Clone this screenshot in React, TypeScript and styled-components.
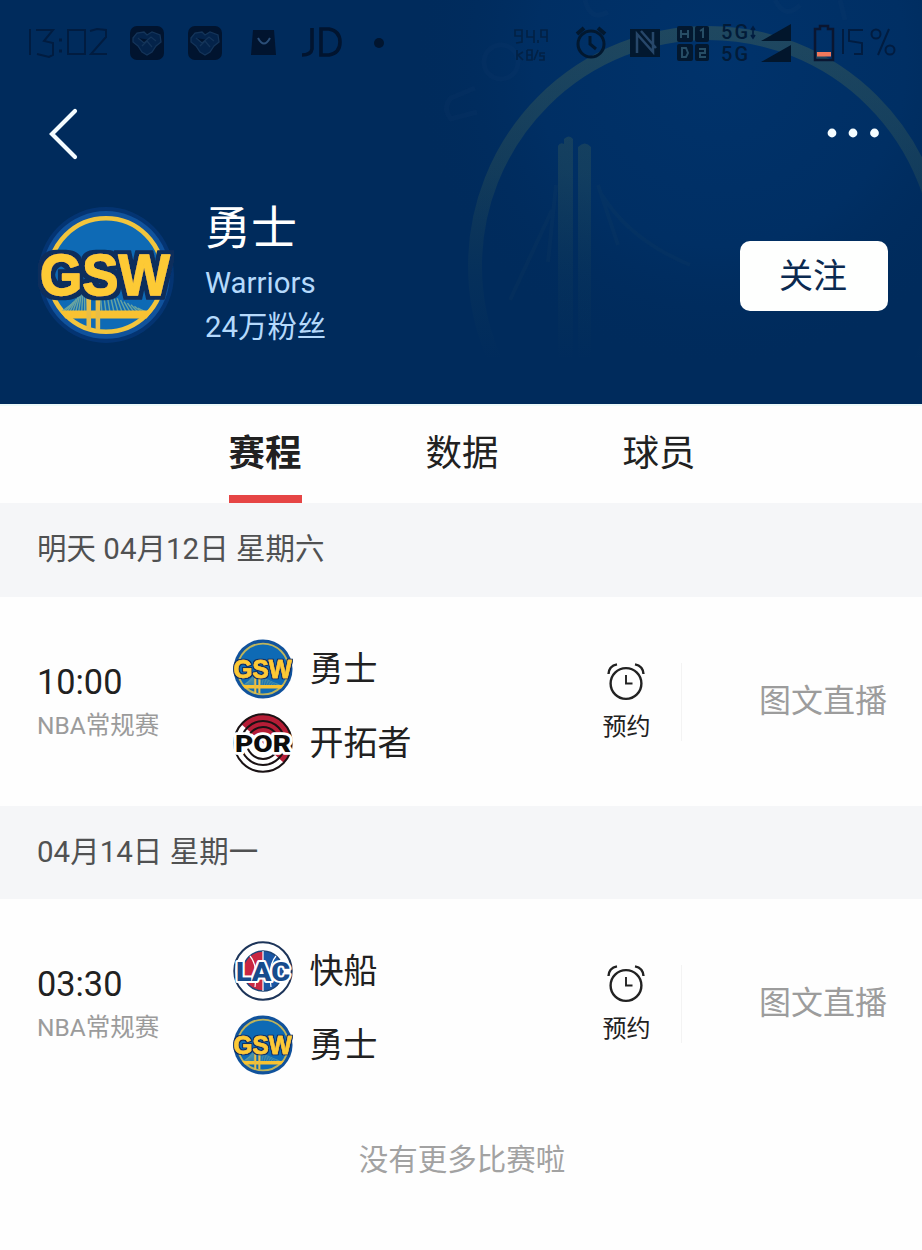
import React, { useId } from "react";
import styled, { createGlobalStyle } from "styled-components";

const GlobalStyle = createGlobalStyle`
  * { box-sizing: border-box; }
  body {
    margin: 0;
    background: #fefefe;
    font-family: Roboto, "Noto Sans CJK SC", sans-serif;
    color: #212121;
  }
`;

const Page = styled.main`
  width: 922px;
  height: 1250px;
  overflow: hidden;
  background: #fefefe;
`;

const Hero = styled.header`
  position: relative;
  height: 404px;
  background: #002b5c;
  overflow: hidden;
`;

const Watermark = styled.svg`
  position: absolute;
  inset: 0;
`;

const HeroContent = styled.div`
  position: relative;
  display: flex;
  flex-direction: column;
`;

const StatusIcons = styled.svg`
  display: block;
  width: 922px;
  height: 86px;
`;

const NavBar = styled.nav`
  display: flex;
  justify-content: space-between;
  align-items: center;
  height: 96px;
  padding: 0 42px 0 48px;
`;

const Profile = styled.section`
  display: flex;
  align-items: flex-start;
  padding: 17px 34px 0 32px;
`;

const LogoSvg = styled.svg<{ $drop?: number }>`
  flex: none;
  overflow: visible;
  margin-top: ${(p) => p.$drop ?? 0}px;
`;

const LogoText = styled.text<{ $face?: string }>`
  font-family: ${(p) => p.$face ?? '"Liberation Sans"'}, Arial, sans-serif;
  font-weight: 900;
  paint-order: stroke;
  stroke-linejoin: round;
`;

const ProfileText = styled.div`
  display: flex;
  flex-direction: column;
  margin-left: 25px;
  flex: 1;
`;

const TeamTitle = styled.h1`
  margin: 0 0 4px;
  font-size: 46px;
  font-weight: 400;
  line-height: 58px;
  color: #fff;
`;

const ProfileLine = styled.p`
  margin: 0;
  font-size: 29.4px;
  line-height: 44px;
  color: #b5d9fb;
`;

const FollowButton = styled.button`
  width: 148px;
  height: 70px;
  margin-top: 42px;
  padding: 0 2px 0 0;
  border: 0;
  border-radius: 10px;
  background: #fefffe;
  color: #0b2a50;
  font: 34px/70px Roboto, "Noto Sans CJK SC", sans-serif;
`;

const Tabs = styled.nav`
  display: flex;
  justify-content: center;
  gap: 124px;
  height: 99px;
  padding-left: 2px;
  border-top: 2px solid #edfafa;
`;

const Tab = styled.a<{ $active?: boolean }>`
  display: flex;
  justify-content: center;
  width: 73px;
  padding-top: 20px;
  font-size: 36.5px;
  line-height: 55px;
  white-space: nowrap;
  font-weight: ${(p) => (p.$active ? 700 : 400)};
  border-bottom: 8px solid ${(p) => (p.$active ? "#e64545" : "transparent")};
`;

const DateBar = styled.h2<{ $height: number }>`
  margin: 0;
  height: ${(p) => p.$height}px;
  padding-left: 37px;
  background: #f5f6f8;
  color: #505152;
  font-size: 29.5px;
  font-weight: 400;
  line-height: ${(p) => p.$height - 1}px;
`;

const MatchRow = styled.article`
  display: grid;
  grid-template-columns: 196.4px 338.6px 110px 1fr;
  height: 209px;
  padding-left: 37px;
`;

const Kickoff = styled.div`
  padding-top: 64px;
`;

const Time = styled.div`
  font-size: 34.3px;
  line-height: 42px;
`;

const League = styled.div`
  font-size: 24.5px;
  line-height: 45px;
  color: #9b9b9b;
`;

const Teams = styled.div`
  display: flex;
  flex-direction: column;
  gap: 14px;
  padding-top: 42px;
`;

const Team = styled.div`
  display: flex;
  align-items: center;
  gap: 16px;
  height: 60px;
  font-size: 34px;
  line-height: 60px;
`;

const Reserve = styled.div`
  display: flex;
  flex-direction: column;
  align-items: center;
  align-self: start;
  height: 78px;
  margin-top: 66px;
  border-right: 1px solid #f3f3f3;
  font-size: 24px;
  line-height: 48px;
`;

const AlarmSvg = styled.svg`
  flex: none;
  width: 40px;
  height: 40px;
`;

const LiveLink = styled.a`
  padding: 82px 35px 0 0;
  text-align: right;
  font-size: 32px;
  line-height: 45px;
  color: #9c9c9c;
`;

const EndNote = styled.p`
  margin: 30px 0 0;
  padding-left: 2px;
  text-align: center;
  font-size: 29.5px;
  line-height: 44px;
  color: #a2a2a2;
`;

function WarriorsLogo({ size, large }: { size: number; large?: boolean }) {
  const outlineId = useId();
  return (
    <LogoSvg
      width={size}
      height={size}
      viewBox={large ? "-3 -2 146 146" : "4 4 132 132"}
      $drop={large ? 3 : 0}
    >
      <defs>
        <filter id={outlineId} x="-10%" y="-20%" width="120%" height="140%">
          <feMorphology in="SourceAlpha" operator="dilate" radius={large ? 4 : 2.6} result="wide" />
          <feFlood floodColor="#0d2d5c" />
          <feComposite in2="wide" operator="in" result="outline" />
          <feMerge>
            <feMergeNode in="outline" />
            <feMergeNode in="SourceGraphic" />
          </feMerge>
        </filter>
      </defs>
      {large && <circle cx="70" cy="70" r="67" fill="#06397c" opacity="0.7" />}
      <circle cx="70" cy="70" r={large ? 63 : 65} fill="#10529c" />
      <circle
        cx="70"
        cy="70"
        r="56"
        fill="#0e6ab5"
        stroke={large ? "#f2c53d" : "#bdb45c"}
        strokeWidth={large ? 4.6 : 4}
      />
      <g stroke="#69a4a0" strokeWidth="1.4">
        {Array.from({ length: 10 }, (_, i) => (
          <path key={i} d={`M${25 + i * 3} 107L${36 + i * 1.6} ${99 - i * 1.8}`} />
        ))}
        {Array.from({ length: 12 }, (_, i) => (
          <path key={i} d={`M${66 + i * 4} 107L${64 + i * 3.4} ${85 + i * 1.6}`} />
        ))}
      </g>
      <path d="M24 105H116L110 113H30Z" fill="#f8c232" />
      <path d="M53 85V124M62 85V124" stroke="#e8bd46" strokeWidth="4.500" />
      <g filter={`url(#${outlineId})`}>
        <LogoText
          x="5"
          y="89.500"
          fontSize="57"
          textLength="128"
          lengthAdjust="spacingAndGlyphs"
          fill="#fdca35"
          stroke="#fdca35"
          strokeWidth="1.400"
        >
          GSW
        </LogoText>
      </g>
    </LogoSvg>
  );
}

function BlazersLogo() {
  return (
    <LogoSvg width="60" height="60" viewBox="0 0 60 60">
      <circle cx="30" cy="30" r="29" fill="#fff" />
      <path d="M8 11A29 29 0 0 1 59 30Q58 42 51 50L40 40L30 30Z" fill="#b61d36" />
      <g fill="none" stroke="#1a1214" strokeWidth="2">
        <circle cx="30" cy="30" r="28.700" />
        <circle cx="30" cy="30" r="22" />
        <circle cx="30" cy="30" r="16" />
      </g>
      <LogoText
        $face="Roboto"
        x="2"
        y="38.500"
        fontSize="24.500"
        textLength="56"
        lengthAdjust="spacingAndGlyphs"
        fill="#0c0c0c"
        stroke="#fff"
        strokeWidth="5.500"
      >
        POR
      </LogoText>
    </LogoSvg>
  );
}

function ClippersLogo() {
  return (
    <LogoSvg width="60" height="60" viewBox="0 0 60 60">
      <circle cx="30" cy="30" r="28.700" fill="#fff" stroke="#1c3459" strokeWidth="2" />
      <path d="M30 10A20 20 0 0 0 30 50Z" fill="#c92742" />
      <path d="M30 10A20 20 0 0 1 30 50Z" fill="#1a56a5" />
      <circle cx="30" cy="30" r="20" fill="none" stroke="#1c4478" strokeWidth="1.400" />
      <path d="M30 10V50M17 15Q25 24 22 46M43 15Q35 24 38 46" fill="none" stroke="#fff" strokeWidth="1.200" />
      <LogoText
        $face="Roboto"
        x="3"
        y="39.500"
        fontSize="26"
        textLength="54"
        lengthAdjust="spacingAndGlyphs"
        fill="#164b8d"
        stroke="#fff"
        strokeWidth="4"
      >
        LAC
      </LogoText>
    </LogoSvg>
  );
}

const AlarmIcon = () => (
  <AlarmSvg viewBox="0 0 40 40" fill="none" stroke="#222" strokeWidth="2.400">
    <circle cx="20" cy="20.500" r="15.400" />
    <path d="M2.500 11Q3 3 11 1.400M37.500 11Q37 3 29 1.400" />
    <path d="M20 12V20.500H26.500" strokeWidth="1.900" />
  </AlarmSvg>
);

function StatusBar() {
  return (
    <StatusIcons viewBox="0 0 922 86" fill="none" stroke="#011c40" strokeWidth="2">
      <path d="M30 29V55M36 30H53L44 41L53 43V55L49 57L37 54M68 30H85V54H68ZM90 31L97 29L106 30V37L91 54H107" />
      <path d="M59 40H62M59 51H62" strokeWidth="3" />
      {[147, 205].map((x) => (
        <g key={x} transform={`translate(${x} 43)`}>
          <rect x="-17" y="-17" width="34" height="34" rx="7" fill="#01142f" stroke="none" />
          <path
            d="M-14 -5L-10 -10L-3 -11L0 -8L5 -11L13 -8L14 -1L9 3L5 9L0 12L-5 9L-9 3L-14 -1ZM-9 -5L-3 0L4 -6L9 -2M-5 3L0 -2L5 4"
            fill="#04234a"
            stroke="#143459"
            strokeWidth="1.300"
          />
        </g>
      ))}
      <path d="M253 30H274L276 55H251Z" fill="#01142f" stroke="none" />
      <path d="M258 38Q264 49 270 38" stroke="#2b4e78" />
      <path d="M312 28V49Q311 55 302 55M321 29H329Q340 31 340 42Q340 53 329 55H321Z" strokeWidth="3.600" stroke="#01142f" />
      <circle cx="379" cy="43" r="5" fill="#01152f" stroke="none" />

      <g stroke="#022246" strokeWidth="1.700">
        <path d="M522 38V30H515V36H522V42L516 43M527 30V37H534M534 30V43M538 40V43M547 37H541V30H547V42" />
        <path d="M517 50V60M523 52L518 55L523 60M527 50V60H532V55H527M527 50H532V55M538 50L534 60M545 53H540V56H544V60H539" />
      </g>

      <g stroke="#02182f" strokeWidth="3">
        <circle cx="591" cy="44" r="13" />
        <path d="M577 34L584 28M598 28L605 34" strokeWidth="4" />
        <path d="M590 36V44L596 49" />
      </g>

      <rect x="630" y="29" width="30" height="28" fill="#02182f" stroke="none" />
      <path d="M637 53V34L653 52V32M641 31L656 48" stroke="#27476a" strokeWidth="2.500" />

      <g fill="#03182f" stroke="none">
        <rect x="677" y="26" width="16" height="16" rx="2" />
        <rect x="695" y="26" width="14" height="16" rx="2" />
        <rect x="677" y="44" width="16" height="17" rx="2" />
        <rect x="695" y="44" width="14" height="17" rx="2" />
      </g>
      <path d="M681 30V38M681 34H688M688 30V38M700 31L703 29V38M682 48V57H686L688 53L686 48ZM699 49H705V53H700V57H706" stroke="#274d65" />

      <g fill="#021b38" stroke="none" fontFamily="Roboto, sans-serif" fontWeight="500">
        <text x="721" y="39" fontSize="20" textLength="27">5G</text>
        <text x="721" y="61" fontSize="20" textLength="27">5G</text>
      </g>
      <path d="M753 28V37M751 30L753 27L755 30M751 35L753 38L755 35" strokeWidth="1.600" />
      <path d="M791 24V41H761ZM791 45V62H761Z" fill="#02162c" stroke="none" />

      <path d="M820 26H828V29H833V60H815V29H820Z" stroke="#0a1631" strokeWidth="2.500" />
      <rect x="817" y="52" width="14" height="4.500" fill="#f0785c" stroke="none" />
      <path d="M843 29V54M863 30H849V41L862 43V54H854M889 29L878 55" />
      <circle cx="876" cy="34" r="4.500" />
      <circle cx="890" cy="50" r="4.500" />
    </StatusIcons>
  );
}

function HeroWatermark() {
  return (
    <Watermark width="922" height="404" viewBox="0 0 922 404">
      <defs>
        <radialGradient id="glow" gradientUnits="userSpaceOnUse" cx="720" cy="60" r="310">
          <stop offset="0" stopColor="#003672" stopOpacity="0.7" />
          <stop offset="0.6" stopColor="#00336c" stopOpacity="0.5" />
          <stop offset="1" stopColor="#002b5c" stopOpacity="0" />
        </radialGradient>
        <linearGradient id="fade" gradientUnits="userSpaceOnUse" x1="0" y1="20" x2="0" y2="360">
          <stop offset="0" stopColor="#64784a" stopOpacity="0.32" />
          <stop offset="0.45" stopColor="#54724f" stopOpacity="0.22" />
          <stop offset="0.75" stopColor="#45664f" stopOpacity="0.08" />
          <stop offset="1" stopColor="#45664f" stopOpacity="0" />
        </linearGradient>
      </defs>
      <rect width="922" height="404" fill="url(#glow)" />
      <circle cx="708" cy="266" r="233" fill="none" stroke="url(#fade)" strokeWidth="14" />
      <path d="M558 380V146Q560 142 564 144V139Q569 134 573 139V380ZM578 380V147Q585 140 591 147V380Z" fill="url(#fade)" />
      <g fill="none" stroke="#3d6593" strokeOpacity="0.05" strokeWidth="5">
        <circle cx="501" cy="62" r="17" />
        <path d="M475 88L451 98Q442 108 451 119L477 112M585 0Q590 22 608 12M775 0Q785 20 800 5M840 0L845 20" />
      </g>
      <g fill="none" stroke="#587a63" strokeOpacity="0.05" strokeWidth="4">
        <path d="M556 185L548 262M552 210L510 300M598 185L618 245M602 195Q630 240 690 265" />
      </g>
    </Watermark>
  );
}

type Club = { name: string; logo: React.ReactNode };

const warriors: Club = { name: "勇士", logo: <WarriorsLogo size={60} /> };
const blazers: Club = { name: "开拓者", logo: <BlazersLogo /> };
const clippers: Club = { name: "快船", logo: <ClippersLogo /> };

const schedule = [
  { date: "明天 04月12日 星期六", barHeight: 94, time: "10:00", clubs: [warriors, blazers] },
  { date: "04月14日 星期一", barHeight: 93, time: "03:30", clubs: [clippers, warriors] },
];

export default function App() {
  return (
    <Page>
      <GlobalStyle />
      <Hero>
        <HeroWatermark />
        <HeroContent>
          <StatusBar />
          <NavBar>
            <svg
              width="32"
              height="52"
              viewBox="0 0 32 52"
              fill="none"
              stroke="#f4fcff"
              strokeWidth="4.200"
              strokeLinecap="round"
            >
              <path d="M27 3L4 26L27 49" />
            </svg>
            <svg width="54" height="12" viewBox="0 0 54 12" fill="#f4fcff">
              <circle cx="6" cy="5" r="4.400" />
              <circle cx="27" cy="5" r="4.400" />
              <circle cx="48.500" cy="5" r="4.400" />
            </svg>
          </NavBar>
          <Profile>
            <WarriorsLogo size={148} large />
            <ProfileText>
              <TeamTitle>勇士</TeamTitle>
              <ProfileLine>Warriors</ProfileLine>
              <ProfileLine>24万粉丝</ProfileLine>
            </ProfileText>
            <FollowButton>关注</FollowButton>
          </Profile>
        </HeroContent>
      </Hero>
      <Tabs>
        <Tab $active>赛程</Tab>
        <Tab>数据</Tab>
        <Tab>球员</Tab>
      </Tabs>
      {schedule.map((day) => (
        <section key={day.date}>
          <DateBar $height={day.barHeight}>{day.date}</DateBar>
          <MatchRow>
            <Kickoff>
              <Time>{day.time}</Time>
              <League>NBA常规赛</League>
            </Kickoff>
            <Teams>
              {day.clubs.map((club) => (
                <Team key={club.name}>
                  {club.logo}
                  {club.name}
                </Team>
              ))}
            </Teams>
            <Reserve>
              <AlarmIcon />
              预约
            </Reserve>
            <LiveLink>图文直播</LiveLink>
          </MatchRow>
        </section>
      ))}
      <EndNote>没有更多比赛啦</EndNote>
    </Page>
  );
}
